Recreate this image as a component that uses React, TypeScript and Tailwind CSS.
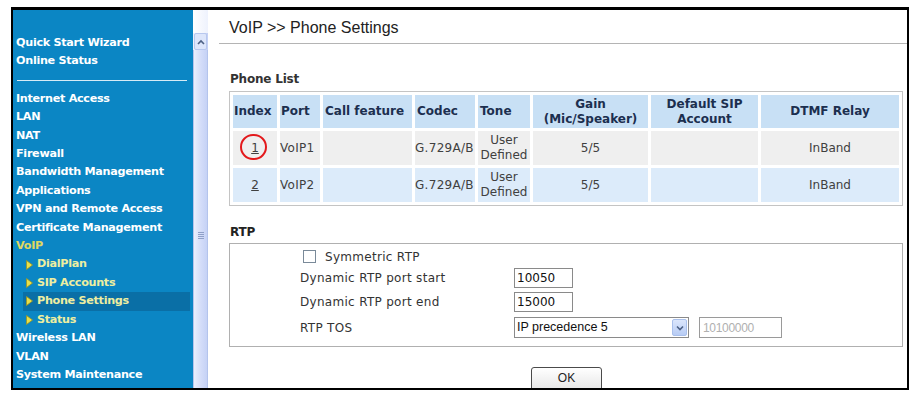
import React from "react";

const MAIN = [
  "Internet Access",
  "LAN",
  "NAT",
  "Firewall",
  "Bandwidth Management",
  "Applications",
  "VPN and Remote Access",
  "Certificate Management",
];

const VOIP_SUB = ["DialPlan", "SIP Accounts", "Phone Settings", "Status"];

const AFTER = ["Wireless LAN", "VLAN", "System Maintenance"];

const ROWS = [
  { idx: "1", port: "VoIP1", row: "bg-[#efefef]", circled: true },
  { idx: "2", port: "VoIP2", row: "bg-[#dcebfa]", circled: false },
];

function Arrow() {
  return (
    <svg width="7" height="10" viewBox="0 0 7 10" className="shrink-0">
      <path d="M0.5 0.5 L6.5 5 L0.5 9.5 Z" fill="#e8e04a" stroke="#9c9420" strokeWidth="0.8" />
    </svg>
  );
}

function Sidebar() {
  return (
    <div className="w-[180px] shrink-0 bg-[#0b86c4] pt-[24px] pl-[3px] text-[11.2px] font-bold leading-[18.4px] tracking-[-0.3px] text-white">
      <div>Quick Start Wizard</div>
      <div>Online Status</div>
      <div className="my-[9px] ml-[1px] mr-[6px] h-px bg-[#d6ebf6]" />
      {MAIN.map((m) => (
        <div key={m}>{m}</div>
      ))}
      <div className="text-[#e0d860]">VoIP</div>
      {VOIP_SUB.map((s) => (
        <div
          key={s}
          className={`ml-[7px] mr-[3px] flex items-center gap-[4px] pl-[3px] text-[#eeeea0] ${
            s === "Phone Settings" ? "bg-[#0a6fa6]" : ""
          }`}
        >
          <Arrow />
          <span>{s}</span>
        </div>
      ))}
      {AFTER.map((m) => (
        <div key={m}>{m}</div>
      ))}
    </div>
  );
}

function Scrollbar() {
  return (
    <div className="flex w-[15px] shrink-0 flex-col bg-gradient-to-r from-[#eef2fc] via-[#d5def9] to-[#c3d0f5]">
      <div className="h-[23px] bg-gradient-to-r from-[#ffffff] to-[#eef2fd]" />
      <div className="mx-[1px] flex h-[17px] items-center justify-center rounded-[2px] border border-[#b8c8ee] bg-[#dde6fb]">
        <svg width="8" height="6" viewBox="0 0 8 6">
          <path d="M1 5 L4 2 L7 5" fill="none" stroke="#4d6185" strokeWidth="1.6" />
        </svg>
      </div>
      <div className="flex flex-1 flex-col items-center justify-center border-x border-[#b4c4ec] pt-[32px]">
        <div className="flex flex-col gap-[1px]">
          <div className="h-px w-[6px] bg-[#8fa0c8]" />
          <div className="h-px w-[6px] bg-[#8fa0c8]" />
          <div className="h-px w-[6px] bg-[#8fa0c8]" />
          <div className="h-px w-[6px] bg-[#8fa0c8]" />
        </div>
      </div>
    </div>
  );
}

function PhoneTable() {
  const head = "bg-[#c8e0f5] text-[#1c2f4f] font-bold";
  return (
    <table className="ml-[10px] w-[674px] table-fixed border-separate border-spacing-[3px] border border-[#c4c4c4] text-[12px] leading-[15px] text-[#404040]">
      <colgroup>
        <col className="w-[44px]" />
        <col className="w-[40px]" />
        <col className="w-[89px]" />
        <col className="w-[60px]" />
        <col className="w-[52px]" />
        <col className="w-[115px]" />
        <col className="w-[107px]" />
        <col className="w-[138px]" />
      </colgroup>
      <thead>
        <tr className="h-[33px]">
          <th className={`${head} pl-[1px] text-left`}>Index</th>
          <th className={`${head} pl-[1px] text-left`}>Port</th>
          <th className={`${head} pl-[2px] text-left`}>Call feature</th>
          <th className={`${head} pl-[2px] text-left`}>Codec</th>
          <th className={`${head} pl-[2px] text-left`}>Tone</th>
          <th className={`${head} text-center`}>
            Gain
            <br />
            (Mic/Speaker)
          </th>
          <th className={`${head} text-center`}>
            Default SIP
            <br />
            Account
          </th>
          <th className={`${head} text-center`}>DTMF Relay</th>
        </tr>
      </thead>
      <tbody>
        {ROWS.map((r) => (
          <tr key={r.idx} className={`h-[34px] ${r.row}`}>
            <td className="relative text-center">
              <span className="underline">{r.idx}</span>
              {r.circled && (
                <span className="absolute left-[7px] top-[3px] h-[26px] w-[27px] rounded-full border-2 border-[#e3191c]" />
              )}
            </td>
            <td className="tracking-[0.3px]">{r.port}</td>
            <td />
            <td className="tracking-[0.3px]">G.729A/B</td>
            <td className="text-center">
              User
              <br />
              Defined
            </td>
            <td className="text-center">5/5</td>
            <td />
            <td className="text-center">InBand</td>
          </tr>
        ))}
      </tbody>
    </table>
  );
}

function RtpBox() {
  return (
    <div className="ml-[10px] mr-[4px] h-[104px] border border-[#b0b0b0] pl-[70px] pt-[6px] text-[12px] tracking-[0.3px] text-[#333]">
      <div className="flex h-[13px] items-center gap-[9px] pl-[3px]">
        <span className="h-[13px] w-[13px] border border-[#7a8a99] bg-white" />
        <span>Symmetric RTP</span>
      </div>
      <div className="mt-[5px] flex h-[20px] items-center">
        <span className="w-[214px]">Dynamic RTP port start</span>
        <span className="flex h-[20px] w-[59px] items-center border border-[#8a8a8a] pl-[2px] text-[12px] tracking-normal text-[#111]">
          10050
        </span>
      </div>
      <div className="mt-[4px] flex h-[20px] items-center">
        <span className="w-[214px]">Dynamic RTP port end</span>
        <span className="flex h-[20px] w-[59px] items-center border border-[#8a8a8a] pl-[2px] text-[12px] tracking-normal text-[#111]">
          15000
        </span>
      </div>
      <div className="mt-[5px] flex h-[21px] items-center">
        <span className="w-[214px]">RTP TOS</span>
        <span className="flex h-[21px] w-[175px] items-center justify-between border border-[#8a8a8a] pl-[2px] pr-[1px] font-['Liberation_Sans',sans-serif] text-[12.5px] tracking-normal text-[#111]">
          IP precedence 5
          <span className="flex h-[17px] w-[15px] items-center justify-center rounded-[2px] border border-[#a9c0ec] bg-gradient-to-b from-[#dbe6fc] to-[#b8ccf4]">
            <svg width="8" height="6" viewBox="0 0 8 6">
              <path d="M1 1.5 L4 4.5 L7 1.5" fill="none" stroke="#4d6185" strokeWidth="1.6" />
            </svg>
          </span>
        </span>
        <span className="ml-[10px] flex h-[21px] w-[83px] items-center border border-[#9a9a9a] pl-[3px] font-['Liberation_Sans',sans-serif] text-[12px] tracking-[-0.3px] text-[#b0b0b0]">
          10100000
        </span>
      </div>
    </div>
  );
}

export default function App() {
  return (
    <div className="h-[395px] w-[913px] overflow-hidden bg-white pl-[11px] pt-[7px] font-['DejaVu_Sans','Verdana',sans-serif]">
      <div className="flex h-[383px] w-[898px] overflow-hidden border-b-2 border-l-2 border-r-2 border-t-[3px] border-black">
        <Sidebar />
        <Scrollbar />
        <div className="min-w-0 flex-1 pl-[11px]">
          <div className="pl-[10px] pt-[8px] font-['Liberation_Sans','Arial',sans-serif] text-[16px] leading-[19px] text-[#222]">
            VoIP &gt;&gt; Phone Settings
          </div>
          <div className="mt-[6px] h-px bg-[#b4b4b4]" />
          <div className="mt-[28px] pl-[11px] text-[12px] font-bold leading-[15px] tracking-[-0.2px] text-[#333]">
            Phone List
          </div>
          <div className="mt-[4px]">
            <PhoneTable />
          </div>
          <div className="mt-[19px] pl-[11px] text-[12px] font-bold leading-[15px] tracking-[-0.2px] text-[#222]">
            RTP
          </div>
          <div className="mt-[3px]">
            <RtpBox />
          </div>
          <div className="mt-[20px] flex pl-[312px]">
            <button className="h-[24px] w-[71px] rounded-[3px] border border-[#4a4a4a] bg-gradient-to-b from-[#ffffff] to-[#e6e6e6] pb-[2px] font-['Liberation_Sans',sans-serif] text-[12px] text-[#222]">
              OK
            </button>
          </div>
        </div>
      </div>
    </div>
  );
}
